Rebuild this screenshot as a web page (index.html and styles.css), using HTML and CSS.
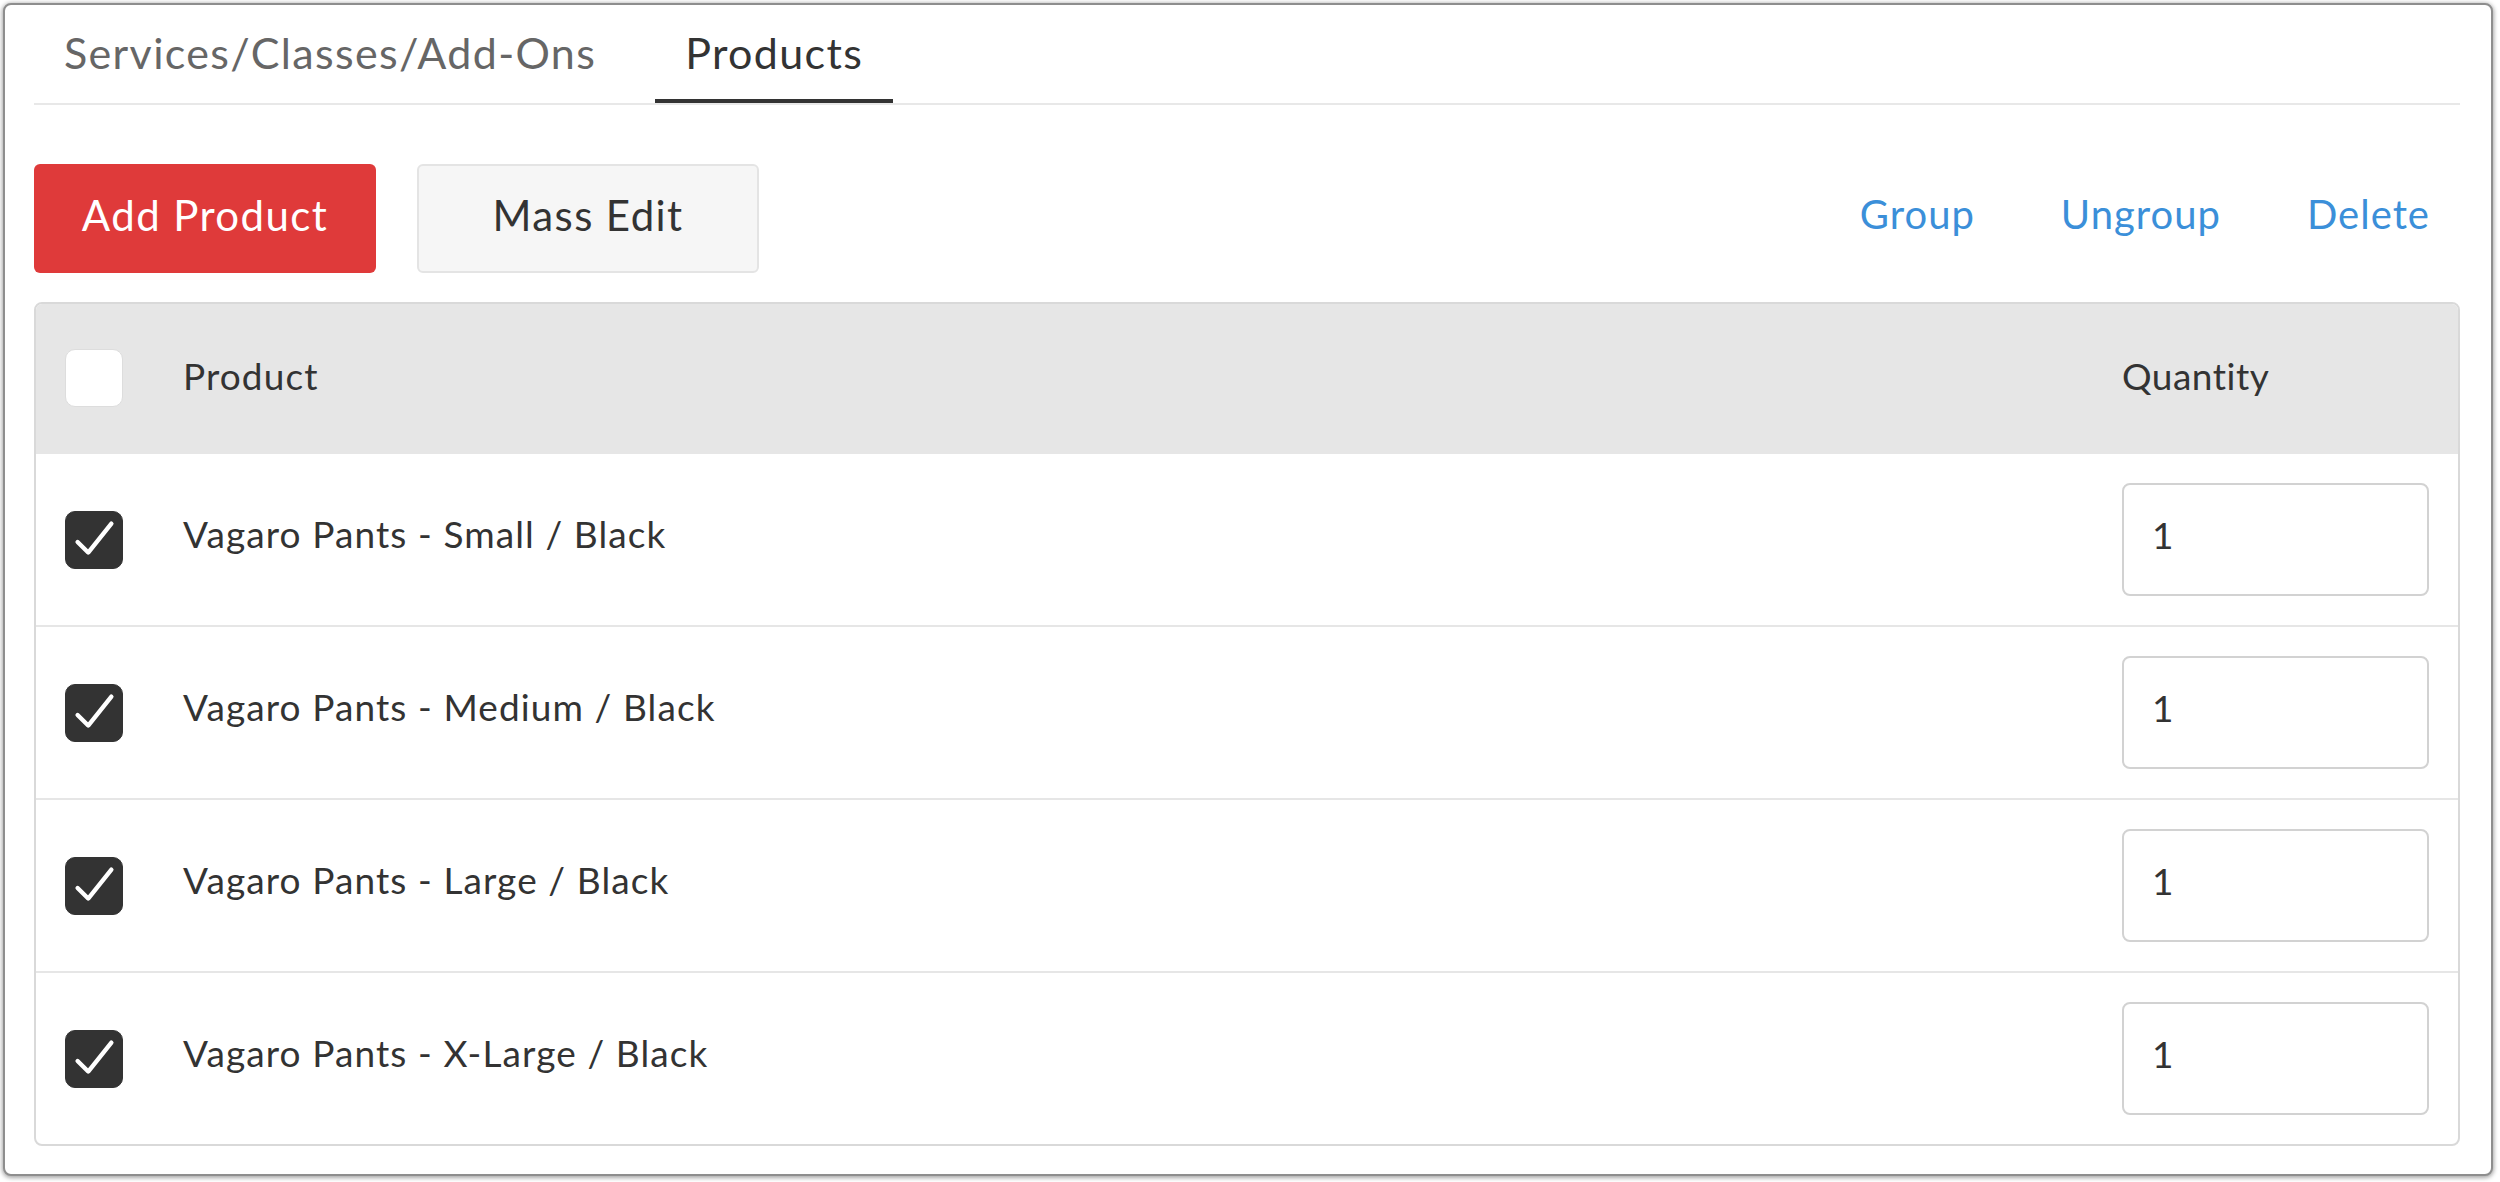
FILE: index.html
```html
<!DOCTYPE html>
<html>
<head>
<meta charset="utf-8">
<link rel="stylesheet" href="styles.css">
</head>
<body>
<div class="frame">
  <nav class="tabs">
    <div class="tab">Services/Classes/Add-Ons</div>
    <div class="tab active">Products</div>
  </nav>
  <div class="toolbar">
    <button class="btn btn-primary">Add Product</button>
    <button class="btn btn-secondary">Mass Edit</button>
    <div class="links">
      <a class="link">Group</a>
      <a class="link">Ungroup</a>
      <a class="link">Delete</a>
    </div>
  </div>
  <div class="table">
    <div class="row head">
      <span class="cb"></span>
      <span class="name">Product</span>
      <span class="qty-head">Quantity</span>
    </div>
    <div class="row">
      <span class="cb checked"><svg viewBox="0 0 58 58"><polyline points="12,31 23,42 47,12"/></svg></span>
      <span class="name">Vagaro Pants - Small / Black</span>
      <span class="qty-input">1</span>
    </div>
    <div class="row">
      <span class="cb checked"><svg viewBox="0 0 58 58"><polyline points="12,31 23,42 47,12"/></svg></span>
      <span class="name">Vagaro Pants - Medium / Black</span>
      <span class="qty-input">1</span>
    </div>
    <div class="row">
      <span class="cb checked"><svg viewBox="0 0 58 58"><polyline points="12,31 23,42 47,12"/></svg></span>
      <span class="name">Vagaro Pants - Large / Black</span>
      <span class="qty-input">1</span>
    </div>
    <div class="row">
      <span class="cb checked"><svg viewBox="0 0 58 58"><polyline points="12,31 23,42 47,12"/></svg></span>
      <span class="name">Vagaro Pants - X-Large / Black</span>
      <span class="qty-input">1</span>
    </div>
  </div>
</div>
</body>
</html>
```

FILE: styles.css
```css
* { box-sizing: border-box; }

html, body {
  margin: 0;
  padding: 0;
  background: #ffffff;
}

body {
  font-family: "Lato", "Liberation Sans", sans-serif;
  color: #333333;
}

.frame {
  margin: 3px 7px 6px 3px;
  height: 1173px;
  border: 2px solid #8e8e8e;
  border-radius: 8px;
  box-shadow: 0 1px 4px 1px rgba(0, 0, 0, 0.35);
  padding: 0 31px 0 29px;
  background: #ffffff;
}

.tabs {
  display: flex;
  gap: 29px;
  border-bottom: 2px solid #e8e8e8;
}

.tab {
  height: 98px;
  display: flex;
  align-items: center;
  padding: 0 30px;
  border-bottom: 4px solid transparent;
  font-size: 43px;
  letter-spacing: 1.35px;
  color: #666666;
}

.tab.active {
  color: #333333;
  border-bottom-color: #333333;
}

.toolbar {
  margin-top: 59px;
  height: 109px;
  display: flex;
  align-items: center;
  gap: 41px;
}

.btn {
  height: 109px;
  width: 342px;
  border-radius: 6px;
  font-family: inherit;
  font-size: 42px;
  letter-spacing: 1.4px;
  display: flex;
  align-items: center;
  justify-content: center;
  padding: 0 0 8px 0;
  cursor: pointer;
}

.btn-primary {
  background: #df3a3a;
  border: none;
  color: #ffffff;
}

.btn-secondary {
  background: #f6f6f6;
  border: 2px solid #e4e4e4;
  color: #333333;
}

.links {
  margin-left: auto;
  display: flex;
  gap: 86px;
  padding-right: 30px;
  padding-bottom: 10px;
}

.link {
  font-size: 40px;
  letter-spacing: 1px;
  color: #3b8fd9;
  cursor: pointer;
}

.table {
  margin-top: 29px;
  border: 2px solid #d9d9d9;
  border-radius: 8px;
  overflow: hidden;
}

.row {
  display: grid;
  grid-template-columns: 58px 1fr 307px;
  column-gap: 60px;
  align-items: center;
  padding: 0 29px 0 29px;
  height: 173px;
  border-top: 2px solid #e6e6e6;
  font-size: 37px;
  letter-spacing: 1.1px;
}

.row.head {
  height: 148px;
  border-top: none;
  background: #e6e6e6;
}

.name {
  margin-bottom: 12px;
}

.row.head .name,
.qty-head {
  margin-bottom: 6px;
}

.qty-head {
  letter-spacing: 0.5px;
}

.cb {
  width: 58px;
  height: 58px;
  border-radius: 10px;
  background: #ffffff;
  border: 1px solid #dddddd;
  display: block;
}

.cb.checked {
  background: #333333;
  border-color: #333333;
}

.cb svg {
  display: block;
  width: 100%;
  height: 100%;
}

.cb polyline {
  fill: none;
  stroke: #ffffff;
  stroke-width: 4.5;
  stroke-linecap: round;
  stroke-linejoin: round;
}

.qty-input {
  display: flex;
  align-items: center;
  height: 113px;
  border: 2px solid #d2d2d2;
  border-radius: 8px;
  padding: 0 0 10px 28px;
  background: #ffffff;
}
```
